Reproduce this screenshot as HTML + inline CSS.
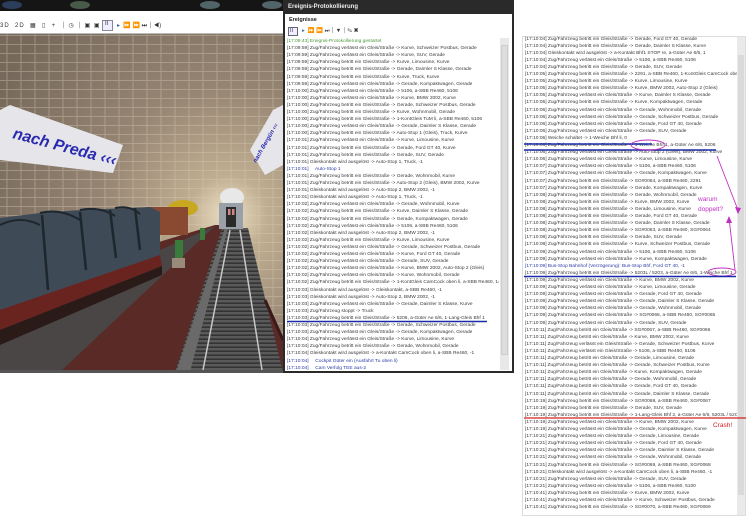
<!DOCTYPE html>
<html><head><meta charset="utf-8"><style>
*{margin:0;padding:0;box-sizing:border-box}
body{width:750px;height:523px;background:#fff;position:relative;overflow:hidden;font-family:"Liberation Sans",sans-serif}
.l{position:absolute;white-space:nowrap;font-size:4.85px;color:#3a3a3a;line-height:7px;overflow:hidden}
.g{color:#4a9a3a}.b{color:#2a3aa8}
</style></head><body>
<svg style="position:absolute;left:0;top:0" width="284" height="373" viewBox="0 0 284 373">
<defs>
<radialGradient id="t" cx="228" cy="215" r="260" gradientUnits="userSpaceOnUse">
<stop offset="0" stop-color="#eee2c6"/><stop offset="0.15" stop-color="#c0ae92"/><stop offset="0.5" stop-color="#958472"/><stop offset="1" stop-color="#76695c"/></radialGradient>
<pattern id="br" width="14" height="9" patternUnits="userSpaceOnUse"><path d="M0 8.5H14M7 0V8.5" stroke="#d8ccb4" stroke-width="0.8" opacity="0.5"/></pattern>
<pattern id="sl" width="6" height="4" patternUnits="userSpaceOnUse"><rect width="6" height="4" fill="#5a5a5a"/><rect y="2.5" width="6" height="1.3" fill="#2a2a2a"/></pattern>
</defs>
<rect x="0" y="0" width="284" height="11" fill="#151515"/>
<ellipse cx="12" cy="5" rx="10" ry="4" fill="#3a5a8a" opacity=".6"/>
<ellipse cx="80" cy="5" rx="10" ry="4" fill="#6a8a6a" opacity=".6"/>
<ellipse cx="210" cy="5" rx="10" ry="4" fill="#7a9aa0" opacity=".6"/>
<ellipse cx="272" cy="5" rx="10" ry="4" fill="#7a9aa0" opacity=".6"/>
<rect x="0" y="34" width="284" height="338" fill="url(#t)"/>
<rect x="0" y="34" width="284" height="338" fill="url(#br)"/>
<polygon points="0,372 283,372 283,340 232,225 215,225 0,290" fill="#5a2a26"/>
<polygon points="0,372 60,372 200,240 215,226 0,320" fill="#4a4646"/>
<polygon points="175,372 283,372 248,228 222,228" fill="url(#sl)"/>
<polygon points="176,372 190,372 228,228 225,228" fill="#6a6a6a"/>
<line x1="203" y1="370" x2="230" y2="230" stroke="#c8c8c8" stroke-width="1.5"/>
<line x1="262" y1="370" x2="240" y2="230" stroke="#c8c8c8" stroke-width="1.5"/>
<line x1="265" y1="300" x2="283" y2="340" stroke="#3a1a18" stroke-width="3"/>
<ellipse cx="232" cy="197" rx="12" ry="9" fill="#e8e8e8"/>
<rect x="219" y="203" width="24" height="26" fill="#9aa0a8"/>
<rect x="226" y="207" width="10" height="20" fill="#2a2a2a"/>
<rect x="228" y="209" width="2.5" height="6" fill="#c88"/><rect x="232" y="209" width="2.5" height="6" fill="#c88"/>
<ellipse cx="183" cy="208" rx="15" ry="8" fill="#c8a820"/>
<rect x="146" y="207" width="42" height="28" fill="#8a4a32"/>
<polygon points="0,218 40,213 80,210 150,207 160,212 160,260 0,310" fill="#3e4a55"/>
<path d="M0 225 Q20 215 40 225 M40 213 Q60 208 80 220 M80 210 Q100 206 115 216 M115 208 Q130 205 140 214" stroke="#1e262e" stroke-width="2" fill="none"/>
<path d="M42 215 L48 290 M80 212 L86 270 M110 210 L116 258 M135 208 L140 250" stroke="#1e262e" stroke-width="2.5"/>
<polygon points="0,310 160,255 162,266 0,330" fill="#6a2420"/>
<polygon points="0,330 162,266 162,275 0,345" fill="#2a1a18"/>
<rect x="175" y="240" width="8" height="20" fill="#3a7a3a"/><rect x="172" y="258" width="13" height="10" fill="#9a8a7a"/>
<rect x="200" y="228" width="5" height="12" fill="#3a7a3a"/>
<polygon points="10,105 123,145 113,173 0,160 0,110" fill="#e6e6ea"/>
<text x="12" y="138" transform="rotate(15 12 138)" font-family="Liberation Sans" font-weight="bold" font-style="italic" font-size="16" fill="#2a2ab0">nach Preda ‹‹‹</text>
<polygon points="273,110 283,105 283,165 265,175 250,150" fill="#e6e6ea"/>
<text x="256" y="163" transform="rotate(-60 256 163)" font-family="Liberation Sans" font-weight="bold" font-style="italic" font-size="6" fill="#2a2ab0">nach Bergün ‹‹‹</text>
<rect x="0" y="370" width="284" height="3" fill="#555"/>
</svg>
<div style="position:absolute;left:0;top:11px;width:284px;height:23px;background:#fff;border-bottom:1px solid #bbb"></div>
<div style="position:absolute;left:0;top:22px;font-size:6px;color:#333;letter-spacing:1px;white-space:nowrap">3D&nbsp; 2D&nbsp; ▦ &nbsp;▯&nbsp; +&nbsp; ⏐ ◷ ⏐ ▣ ▣ ⏐</div>
<div style="position:absolute;left:102px;top:20px;width:11px;height:11px;border:1px solid #889;background:#eef"></div>
<div style="position:absolute;left:105px;top:21px;font-size:6px;color:#334">II</div>
<div style="position:absolute;left:117px;top:22px;font-size:6px;color:#3a6aa0;white-space:nowrap">▸ &nbsp;<span style="color:#333">⏩ ⏩ ⏭ ⏐ ◀)</span></div>
<div style="position:absolute;left:283px;top:0;width:231px;height:373px;background:#2a2a2a"></div>
<div style="position:absolute;left:288px;top:4px;font-size:6px;font-weight:bold;color:#eee">Ereignis-Protokollierung</div>
<div style="position:absolute;left:285px;top:14px;width:227px;height:357px;background:#fff"></div>
<div style="position:absolute;left:289px;top:17px;font-size:5.5px;font-weight:bold;color:#222">Ereignisse</div>
<div style="position:absolute;left:288px;top:27px;width:10px;height:9px;border:1px solid #667;background:#eef"></div>
<div style="position:absolute;left:290px;top:28px;font-size:5.5px;color:#334">II</div>
<div style="position:absolute;left:302px;top:28px;font-size:5.5px;color:#333;white-space:nowrap"><span style="color:#3a6aa0">▸</span>&nbsp; ⏩ ⏩ ⏭ ⏐ ▼ ⏐ ✎ ▣</div>
<div style="position:absolute;left:500px;top:38px;width:9px;height:332px;background:#e8e8e8"></div>
<div style="position:absolute;left:501px;top:45px;width:7px;height:310px;background:#ddd;border:1px solid #ccc"></div>
<div id="m"></div>
<div style="position:absolute;left:522px;top:36px;width:224px;height:480px;border:1px solid #ddd"></div>
<div style="position:absolute;left:737px;top:37px;width:8px;height:478px;background:#eaeaea"></div>
<div style="position:absolute;left:738px;top:55px;width:6px;height:440px;background:#dadada"></div>
<div id="r"></div>
<svg style="position:absolute;left:0;top:0" width="750" height="523">
<line x1="287" y1="321.5" x2="487" y2="321.5" stroke="#1a2aa8" stroke-width="1.5"/>
<line x1="524" y1="144" x2="652" y2="144" stroke="#1a2aa8" stroke-width="1.5"/>
<line x1="524" y1="150" x2="716" y2="150" stroke="#1a2aa8" stroke-width="1.5"/>
<ellipse cx="648" cy="145" rx="17" ry="5" fill="none" stroke="#c030c0" stroke-width="0.9"/>
<line x1="717" y1="156" x2="738" y2="210" stroke="#c030c0" stroke-width="0.9"/>
<line x1="735" y1="270" x2="729" y2="218" stroke="#c030c0" stroke-width="0.9"/>
<polygon points="738,214 735,207 741,208" fill="#c030c0"/>
<polygon points="729,216 726,223 732,223" fill="#c030c0"/>
<ellipse cx="722" cy="272" rx="14" ry="4" fill="none" stroke="#c030c0" stroke-width="0.9"/>
<line x1="524" y1="276.5" x2="736" y2="276.5" stroke="#1a2aa8" stroke-width="1.5"/>
<line x1="524" y1="418" x2="746" y2="418" stroke="#d02020" stroke-width="1.2"/>
<text x="698" y="201" font-family="Liberation Sans" font-size="6.5" fill="#c030c0">warum</text>
<text x="698" y="211" font-family="Liberation Sans" font-size="6.5" fill="#c030c0">doppelt?</text>
<text x="713" y="427" font-family="Liberation Sans" font-size="6.5" fill="#d02020">Crash!</text>
</svg>
<script>
var Z='Zug/Fahrzeug ',V=Z+'verlässt ein Gleis/Straße -> ',B=Z+'betritt ein Gleis/Straße -> ',G='Gleiskontakt wird ausgelöst -> ';
var m=[['17:09:43','<span class="g">[17:09:43] Ereignis-Protokollierung gestartet</span>'],
['17:09:59',V+'Kurve, Schweizer Postbus, Gerade'],['17:09:59',V+'Kurve, SUV, Gerade'],['17:09:59',B+'Kurve, Limousine, Kurve'],['17:09:59',B+'Gerade, Daimler S Klasse, Gerade'],['17:09:59',B+'Kurve, Truck, Kurve'],['17:09:59',V+'Gerade, Kompaktwagen, Gerade'],
['17:10:00',V+'5106, a-SBB Re460, 5106'],['17:10:00',V+'Kurve, BMW 2002, Kurve'],['17:10:00',B+'Gerade, Schweizer Postbus, Gerade'],['17:10:00',B+'Kurve, Wohnmobil, Gerade'],['17:10:00',B+'1-KontGleis TuM li, a-SBB Re460, 5106'],['17:10:00',V+'Gerade, Daimler S Klasse, Gerade'],['17:10:00',B+'Auto-Stop 1 (Gleis), Truck, Kurve'],
['17:10:01',V+'Kurve, Limousine, Kurve'],['17:10:01',B+'Gerade, Ford GT 40, Kurve'],['17:10:01',B+'Gerade, SUV, Gerade'],['17:10:01',G+'Auto-Stop 1, Truck, -1'],['17:10:01','<span class="b">[17:10:01] &nbsp; &nbsp; Auto-Stop 1</span>'],['17:10:01',B+'Gerade, Wohnmobil, Kurve'],['17:10:01',B+'Auto-Stop 2 (Gleis), BMW 2002, Kurve'],['17:10:01',G+'Auto-Stop 2, BMW 2002, -1'],['17:10:01',G+'Auto-Stop 1, Truck, -1'],
['17:10:02',V+'Gerade, Wohnmobil, Kurve'],['17:10:02',B+'Kurve, Daimler S Klasse, Gerade'],['17:10:02',B+'Gerade, Kompaktwagen, Gerade'],['17:10:02',V+'5106, a-SBB Re460, 5106'],['17:10:02',G+'Auto-Stop 2, BMW 2002, -1'],['17:10:02',B+'Kurve, Limousine, Kurve'],['17:10:02',V+'Gerade, Schweizer Postbus, Gerade'],['17:10:02',V+'Kurve, Ford GT 40, Gerade'],['17:10:02',V+'Gerade, SUV, Gerade'],['17:10:02',V+'Kurve, BMW 2002, Auto-Stop 2 (Gleis)'],['17:10:02',V+'Kurve, Wohnmobil, Gerade'],['17:10:02',B+'1-KontGleis CamCock oben li, a-SBB Re460, 14'],
['17:10:03',G+'Gleiskontakt, a-SBB Re460, -1'],['17:10:03',G+'Auto-Stop 2, BMW 2002, -1'],['17:10:03',V+'Gerade, Daimler S Klasse, Kurve'],['17:10:03',Z+'stoppt -> Truck'],['17:10:03',B+'5206, a-Güter Ae 6/6, 1-Lang-Gleis Bhf 1'],['17:10:03',B+'Gerade, Schweizer Postbus, Gerade'],['17:10:03',V+'Gerade, Kompaktwagen, Gerade'],
['17:10:04',V+'Kurve, Limousine, Kurve'],['17:10:04',B+'Gerade, Wohnmobil, Gerade'],['17:10:04',G+'a-Kontakt CamCock oben li, a-SBB Re460, -1'],['17:10:04','<span class="b">[17:10:04] &nbsp; &nbsp; Cockpit Güter ein (Ausfahrt Tu oben li)</span>'],['17:10:04','<span class="b">[17:10:04] &nbsp; &nbsp; Cam Verfolg TEE aus-2</span>']];
var r=[['17:10:04',B+'Gerade, Ford GT 40, Gerade'],['17:10:04',B+'Gerade, Daimler S Klasse, Kurve'],['17:10:04',G+'a-Kontakt Bhf1 STOP re, a-Güter Ae 6/6, 1'],['17:10:04',V+'5106, a-SBB Re460, 5106'],['17:10:04',B+'Gerade, SUV, Gerade'],
['17:10:05',B+'2291, a-SBB Re460, 1-KontGleis CamCock oben'],['17:10:05',B+'Kurve, Limousine, Kurve'],['17:10:05',B+'Kurve, BMW 2002, Auto-Stop 2 (Gleis)'],['17:10:05',V+'Kurve, Daimler S Klasse, Gerade'],['17:10:05',B+'Kurve, Kompaktwagen, Gerade'],
['17:10:06',V+'Gerade, Wohnmobil, Gerade'],['17:10:06',V+'Gerade, Schweizer Postbus, Gerade'],['17:10:06',V+'Gerade, Ford GT 40, Gerade'],['17:10:06',V+'Gerade, SUV, Gerade'],['17:10:06','Weiche schaltet -> 1-Weiche Bhf li, 0'],['17:10:06',B+'1-Weiche Bhf 1, a-Güter Ae 6/6, 5206'],['17:10:06',V+'Auto-Stop 2 (Gleis), BMW 2002, Kurve'],['17:10:06',V+'Kurve, Limousine, Kurve'],
['17:10:07',V+'5106, a-SBB Re460, 5106'],['17:10:07',V+'Gerade, Kompaktwagen, Kurve'],['17:10:07',B+'SG#0064, a-SBB Re460, 2291'],['17:10:07',B+'Gerade, Kompaktwagen, Kurve'],
['17:10:08',B+'Gerade, Wohnmobil, Gerade'],['17:10:08',B+'Kurve, BMW 2002, Kurve'],['17:10:08',B+'Gerade, Limousine, Kurve'],['17:10:08',B+'Gerade, Ford GT 40, Gerade'],['17:10:08',B+'Gerade, Daimler S Klasse, Gerade'],['17:10:08',B+'SG#0063, a-SBB Re460, SG#0064'],['17:10:08',B+'Gerade, SUV, Gerade'],['17:10:08',B+'Kurve, Schweizer Postbus, Gerade'],
['17:10:09',V+'5106, a-SBB Re460, 5106'],['17:10:09',V+'Kurve, Kompaktwagen, Gerade'],['17:10:09','<span class="b">[17:10:09] Bus-Stop Bahnhof (Verzögerung): Bus-Stop Bhf, Ford GT 40, -1</span>'],['17:10:09',B+'5203L / 5203, a-Güter Ae 6/6, 1-Weiche Bhf 1'],['17:10:09',V+'Kurve, BMW 2002, Kurve'],['17:10:09',V+'Kurve, Limousine, Gerade'],['17:10:09',V+'Gerade, Ford GT 40, Gerade'],['17:10:09',V+'Gerade, Daimler S Klasse, Gerade'],['17:10:09',V+'Gerade, Wohnmobil, Gerade'],['17:10:09',V+'SG#0066, a-SBB Re460, SG#0065'],['17:10:09',V+'Gerade, SUV, Gerade'],
['17:10:11',B+'SG#0067, a-SBB Re460, SG#0066'],['17:10:11',B+'Kurve, BMW 2002, Kurve'],['17:10:11',V+'Gerade, Schweizer Postbus, Kurve'],['17:10:11',V+'5106, a-SBB Re460, 5106'],['17:10:11',B+'Gerade, Limousine, Gerade'],['17:10:11',B+'Gerade, Schweizer Postbus, Kurve'],['17:10:11',B+'Kurve, Kompaktwagen, Gerade'],['17:10:11',B+'Gerade, Wohnmobil, Gerade'],['17:10:11',B+'Gerade, Ford GT 40, Gerade'],['17:10:11',B+'Gerade, Daimler S Klasse, Gerade'],
['17:10:19',B+'SG#0068, a-SBB Re460, SG#0067'],['17:10:19',B+'Gerade, SUV, Gerade'],['17:10:19',B+'1-Lang-Gleis Bhf 2, a-Güter Ae 6/6, 5203L / 52C'],['17:10:19',V+'Kurve, BMW 2002, Kurve'],['17:10:19',V+'Gerade, Kompaktwagen, Kurve'],
['17:10:21',V+'Gerade, Limousine, Gerade'],['17:10:21',V+'Gerade, Ford GT 40, Gerade'],['17:10:21',V+'Gerade, Daimler S Klasse, Gerade'],['17:10:21',V+'Gerade, Wohnmobil, Gerade'],['17:10:21',B+'SG#0069, a-SBB Re460, SG#0068'],['17:10:21',G+'a-Kontakt CamCock oben li, a-SBB Re460, -1'],['17:10:21',V+'Gerade, SUV, Gerade'],['17:10:21',V+'5106, a-SBB Re460, 5100'],
['17:10:41',B+'Kurve, BMW 2002, Kurve'],['17:10:41',V+'Kurve, Schweizer Postbus, Gerade'],['17:10:41',B+'SG#0070, a-SBB Re460, SG#0069']];
function put(a,x,y0,dy,w){var h='';for(var i=0;i<a.length;i++){var t=a[i][1];if(t.indexOf('<span')!==0)t='['+a[i][0]+'] '+t;h+='<div class="l" style="left:'+x+'px;top:'+(y0+i*dy).toFixed(1)+'px;width:'+w+'px">'+t+'</div>';}return h;}
document.getElementById('m').outerHTML=put(m,287,38,7.1,212);
document.getElementById('r').outerHTML=put(r,525,35.5,7.1,212);
</script>
</body></html>
